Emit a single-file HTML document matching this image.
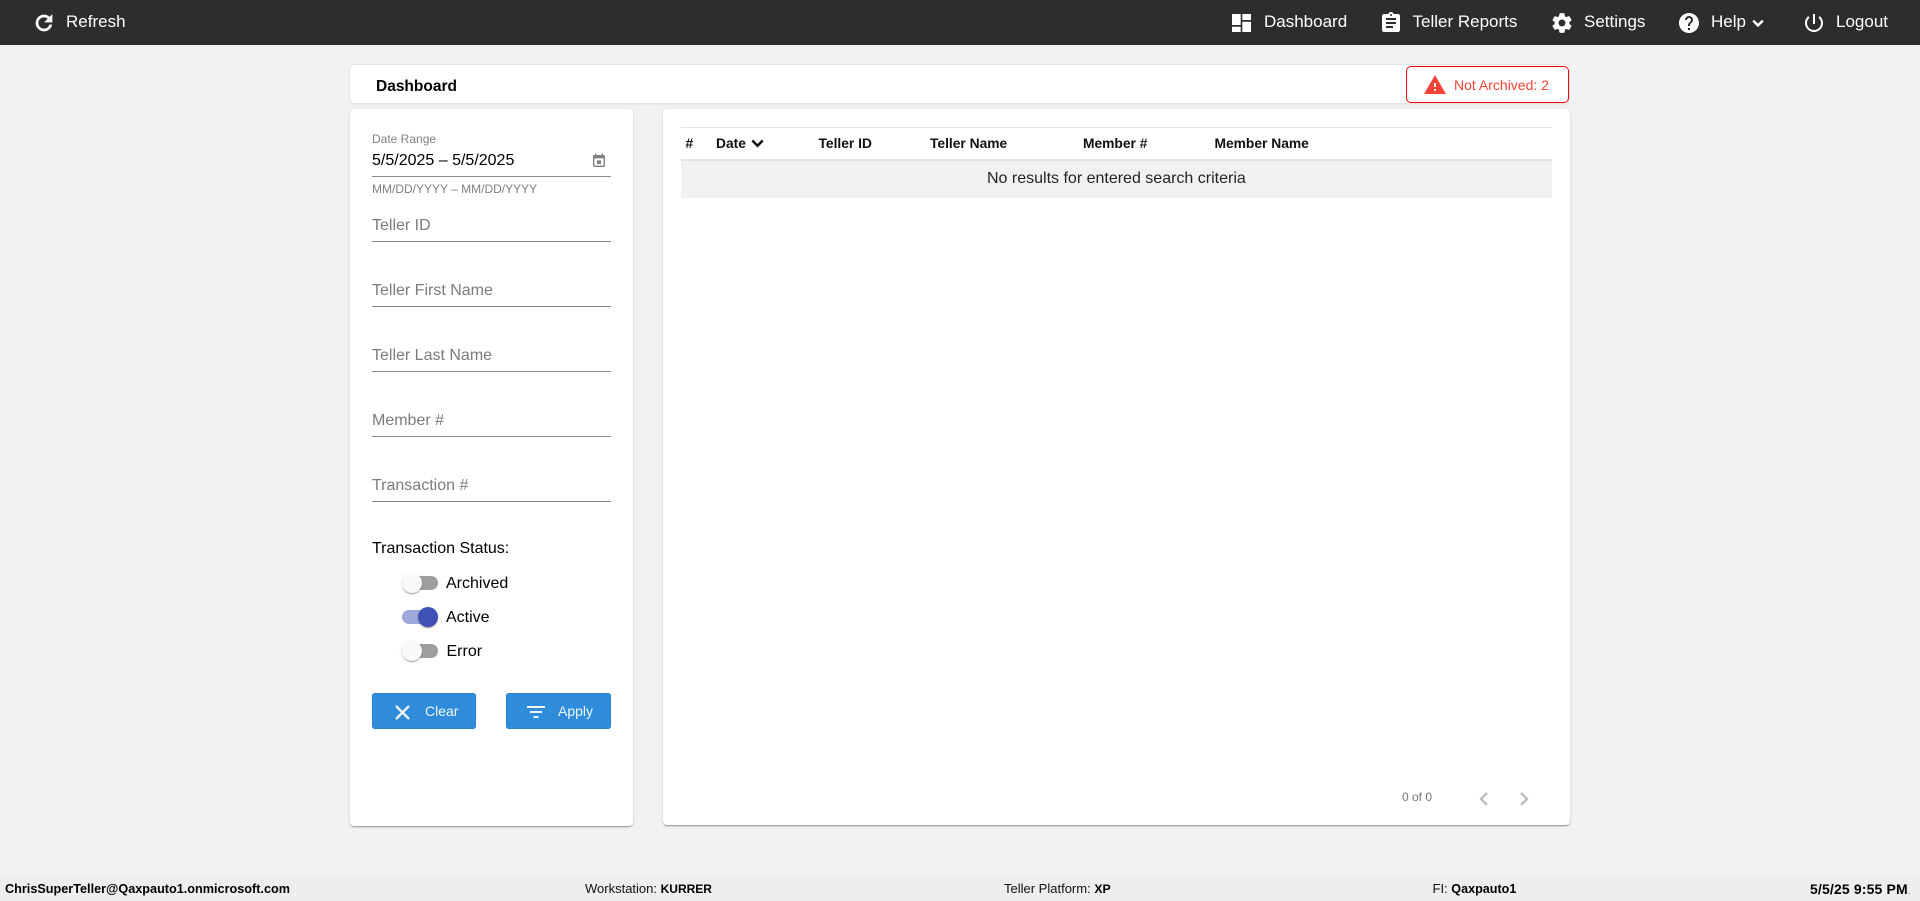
<!DOCTYPE html>
<html lang="en"><head><meta charset="utf-8"><title>Dashboard</title>
<style>
html,body{margin:0;padding:0;width:1920px;height:901px;overflow:hidden;background:#f2f2f2;font-family:"Liberation Sans",Arial,sans-serif;color:#000}
.a{position:absolute;white-space:nowrap}
svg{position:absolute;display:block}
#top{left:0;top:0;width:1920px;height:45px;background:#2d2d2d}
.n{font-size:17px;line-height:20px;color:#fff;top:12px}
.card{background:#fff;border-radius:4px;box-shadow:0 2px 1px -1px rgba(0,0,0,.2),0 1px 1px rgba(0,0,0,.14),0 1px 3px rgba(0,0,0,.12)}
.ph{font-size:16px;line-height:20px;color:#7c7c7c;left:372px}
.ul{left:372px;width:239px;height:1px;background:#8c8c8c}
.lb{font-size:16px;line-height:20px;color:#000}
.track{left:402px;width:36px;height:14px;border-radius:7px;background:#9e9e9e}
.thumb{width:20px;height:20px;border-radius:50%;background:#fafafa;box-shadow:0 2px 1px -1px rgba(0,0,0,.2),0 1px 1px rgba(0,0,0,.14),0 1px 3px rgba(0,0,0,.12)}
.btn{background:#2f8cdb;border-radius:3px;height:36px;top:693px;box-shadow:inset 0 0 0 1px #2a80c9}
.bt{font-size:14px;line-height:20px;color:#f1f6fb;top:701px}
.th{font-size:13.8px;font-weight:bold;line-height:18px;top:135px;color:#111}
.f{font-size:13px;line-height:16px;top:880.5px;color:#111}
.f b{color:#000;font-size:12.6px}
</style></head><body>
<div class="a" id="top"></div>
<svg style="left:32px;top:11px" width="24" height="24" viewBox="0 0 24 24" fill="#fff" stroke="#fff" stroke-width=".7"><path d="M17.65 6.35C16.2 4.9 14.21 4 12 4c-4.42 0-7.99 3.58-7.99 8s3.57 8 7.99 8c3.73 0 6.84-2.55 7.73-6h-2.08c-.82 2.33-3.04 4-5.65 4-3.31 0-6-2.69-6-6s2.69-6 6-6c1.66 0 3.14.69 4.22 1.78L13 11h7V4l-2.35 2.35z"/></svg>
<div class="a n" style="left:66px">Refresh</div>

<svg style="left:1232px;top:14px" width="19" height="18" viewBox="0 0 19 18" fill="#fff"><path d="M0 0h8.700v11H0zM0 12.700h8.700V18H0zM10.300 0H19v6h-8.700zM10.300 7.700H19V18h-8.700z"/></svg>
<div class="a n" style="left:1264px">Dashboard</div>
<svg style="left:1379px;top:11px" width="24" height="24" viewBox="0 0 24 24" fill="#fff"><path d="M19 3h-4.18C14.4 1.84 13.3 1 12 1c-1.3 0-2.4.84-2.82 2H5c-1.1 0-2 .9-2 2v14c0 1.1.9 2 2 2h14c1.1 0 2-.9 2-2V5c0-1.1-.9-2-2-2zm-7 0c.55 0 1 .45 1 1s-.45 1-1 1-1-.45-1-1 .45-1 1-1zm2 14H7v-2h7v2zm3-4H7v-2h10v2zm0-4H7V7h10v2z"/></svg>
<div class="a n" style="left:1412.5px">Teller Reports</div>
<svg style="left:1549.700px;top:11px" width="24" height="24" viewBox="0 0 24 24" fill="#fff" stroke="#fff" stroke-width=".4"><path d="M19.14 12.94c.04-.3.06-.61.06-.94 0-.32-.02-.64-.07-.94l2.03-1.58c.18-.14.23-.41.12-.61l-1.92-3.32c-.12-.22-.37-.29-.59-.22l-2.39.96c-.5-.38-1.03-.7-1.62-.94l-.36-2.54c-.04-.24-.24-.41-.48-.41h-3.84c-.24 0-.43.17-.47.41l-.36 2.54c-.59.24-1.13.57-1.62.94l-2.39-.96c-.22-.08-.47 0-.59.22L2.74 8.87c-.12.21-.08.47.12.61l2.03 1.58c-.05.3-.09.63-.09.94s.02.64.07.94l-2.03 1.58c-.18.14-.23.41-.12.61l1.92 3.32c.12.22.37.29.59.22l2.39-.96c.5.38 1.03.7 1.62.94l.36 2.54c.05.24.24.41.48.41h3.84c.24 0 .44-.17.47-.41l.36-2.54c.59-.24 1.13-.56 1.62-.94l2.39.96c.22.08.47 0 .59-.22l1.92-3.32c.12-.22.07-.47-.12-.61l-2.01-1.58zM12 15.6c-1.98 0-3.6-1.62-3.6-3.6s1.62-3.6 3.6-3.6 3.6 1.62 3.6 3.6-1.62 3.6-3.6 3.6z"/></svg>
<div class="a n" style="left:1584px">Settings</div>
<svg style="left:1677px;top:10.500px" width="24" height="24" viewBox="0 0 24 24" fill="#fff"><path d="M12 2C6.48 2 2 6.48 2 12s4.48 10 10 10 10-4.48 10-10S17.52 2 12 2zm1 17h-2v-2h2v2zm2.07-7.75l-.9.92C13.45 12.9 13 13.5 13 15h-2v-.5c0-1.1.45-2.1 1.17-2.83l1.24-1.26c.37-.36.59-.86.59-1.41 0-1.1-.9-2-2-2s-2 .9-2 2H8c0-2.21 1.79-4 4-4s4 1.79 4 4c0 .88-.36 1.68-.93 2.25z"/></svg>
<div class="a n" style="left:1711px">Help</div>
<svg style="left:1752px;top:18.500px" width="12" height="9" viewBox="0 0 12 9" fill="none" stroke="#fff" stroke-width="2.400"><path d="M1.200 1.600L6 6.400l4.800-4.800"/></svg>
<svg style="left:1802px;top:11px" width="24" height="24" viewBox="0 0 24 24" fill="#fff"><path d="M13 3h-2v10h2V3zm4.830 2.170l-1.420 1.420C17.990 7.860 19 9.810 19 12c0 3.870-3.130 7-7 7s-7-3.130-7-7c0-2.190 1.010-4.140 2.580-5.420L6.170 5.170C4.230 6.820 3 9.260 3 12c0 4.970 4.030 9 9 9s9-4.030 9-9c0-2.740-1.230-5.180-3.170-6.830z"/></svg>
<div class="a n" style="left:1836px">Logout</div>

<div class="a" style="left:350px;top:65px;width:1219px;height:38px;background:#fff;border-radius:4px;box-shadow:0 0 0 1px #e4e4e4,0 1px 2px rgba(0,0,0,.1)"></div>
<div class="a" style="left:376px;top:77px;font-size:15.5px;font-weight:bold;line-height:20px">Dashboard</div>
<div class="a" style="left:1406px;top:66px;width:161px;height:35px;border:1px solid #f00;border-radius:5px;background:#fff"></div>
<svg style="left:1422.500px;top:73px" width="24" height="24" viewBox="0 0 24 24" fill="#f44336"><path d="M1 21h22L12 2 1 21zm12-3h-2v-2h2v2zm0-4h-2v-4h2v4z"/></svg>
<div class="a" style="left:1454px;top:75px;font-size:14px;line-height:20px;color:#f44336">Not Archived: 2</div>

<div class="a card" style="left:350px;top:109px;width:283px;height:717px"></div>
<div class="a" style="left:372px;top:131.500px;font-size:12px;line-height:15px;color:#808080">Date Range</div>
<div class="a" style="left:372px;top:151px;font-size:16px;line-height:20px">5/5/2025 – 5/5/2025</div>
<svg style="left:591.300px;top:152.600px" width="16" height="16" viewBox="0 0 24 24" fill="#808080"><path d="M15 11h-6v5.500h6zM16 1v2H8V1H6v2H5c-1.110 0-1.990.9-1.990 2L3 19c0 1.100.89 2 2 2h14c1.100 0 2-.9 2-2V5c0-1.100-.9-2-2-2h-1V1h-2zm3 18H5V8h14v11z"/></svg>
<div class="a ul" style="top:176px"></div>
<div class="a" style="left:372px;top:181.500px;font-size:12px;line-height:15px;color:#808080">MM/DD/YYYY – MM/DD/YYYY</div>

<div class="a ph" style="top:216px">Teller ID</div><div class="a ul" style="top:241px"></div>
<div class="a ph" style="top:281px">Teller First Name</div><div class="a ul" style="top:306px"></div>
<div class="a ph" style="top:346px">Teller Last Name</div><div class="a ul" style="top:371px"></div>
<div class="a ph" style="top:411px">Member #</div><div class="a ul" style="top:436px"></div>
<div class="a ph" style="top:476px">Transaction #</div><div class="a ul" style="top:501px"></div>

<div class="a lb" style="left:372px;top:539px">Transaction Status:</div>
<div class="a track" style="top:576px"></div><div class="a thumb" style="left:402px;top:573px"></div>
<div class="a lb" style="left:446px;top:573.500px">Archived</div>
<div class="a track" style="top:610px;background:#9fa8da"></div><div class="a thumb" style="left:418px;top:607px;background:#3f51b5"></div>
<div class="a lb" style="left:446px;top:607.500px">Active</div>
<div class="a track" style="top:644px"></div><div class="a thumb" style="left:402px;top:641px"></div>
<div class="a lb" style="left:446.500px;top:641.500px">Error</div>

<div class="a btn" style="left:372px;width:104px"></div>
<svg style="left:395px;top:705px" width="15" height="15" viewBox="0 0 15 15" fill="none" stroke="#f1f6fb" stroke-width="2.300"><path d="M1 1l13 13M14 1L1 14"/></svg>
<div class="a bt" style="left:425px">Clear</div>
<div class="a btn" style="left:506px;width:105px"></div>
<svg style="left:526px;top:705px" width="20" height="14" viewBox="0 0 20 14" fill="#f1f6fb"><path d="M1 1h18v2H1zM4 6h12v2H4zM7.500 11h5v2h-5z"/></svg>
<div class="a bt" style="left:558px">Apply</div>

<div class="a card" style="left:663px;top:109px;width:907px;height:716px"></div>
<div class="a" style="left:681px;top:127px;width:871px;height:1px;background:#dee2e6"></div>
<div class="a th" style="left:685.500px">#</div>
<div class="a th" style="left:716px">Date</div>
<svg style="left:751px;top:139px" width="13" height="9" viewBox="0 0 13 9" fill="none" stroke="#111" stroke-width="2.500"><path d="M1.300 1.500l5.200 5.200 5.200-5.200"/></svg>
<div class="a th" style="left:818.500px">Teller ID</div>
<div class="a th" style="left:930px">Teller Name</div>
<div class="a th" style="left:1083px">Member #</div>
<div class="a th" style="left:1214.500px">Member Name</div>
<div class="a" style="left:681px;top:159px;width:871px;height:2px;background:#dee2e6"></div>
<div class="a" style="left:681px;top:161px;width:871px;height:37px;background:#f1f1f1"></div>
<div class="a" style="left:987px;top:169px;font-size:16px;line-height:20px;color:#212529">No results for entered search criteria</div>

<div class="a" style="left:1402px;top:790px;font-size:12px;line-height:15px;color:#757575">0 of 0</div>
<svg style="left:1477px;top:791px" width="14" height="16" viewBox="0 0 14 16" fill="none" stroke="#bdbdbd" stroke-width="2.400"><path d="M10 2L4 8l6 6"/></svg>
<svg style="left:1517px;top:791px" width="14" height="16" viewBox="0 0 14 16" fill="none" stroke="#bdbdbd" stroke-width="2.400"><path d="M4 2l6 6-6 6"/></svg>

<div class="a" style="left:0;top:875px;width:1920px;height:26px;background:#eceef0"></div>
<div class="a f" style="left:5px"><b style="font-size:12.660px">ChrisSuperTeller@Qaxpauto1.onmicrosoft.com</b></div>
<div class="a f" style="left:585px">Workstation: <b style="font-size:12px">KURRER</b></div>
<div class="a f" style="left:1004px">Teller Platform: <b style="font-size:12.300px">XP</b></div>
<div class="a f" style="left:1432.500px">FI: <b style="font-size:12.600px">Qaxpauto1</b></div>
<div class="a f" style="left:1810px"><b style="font-size:14px;letter-spacing:.15px">5/5/25 9:55 PM</b><span style="color:#777;font-size:10px">.</span></div>
</body></html>
